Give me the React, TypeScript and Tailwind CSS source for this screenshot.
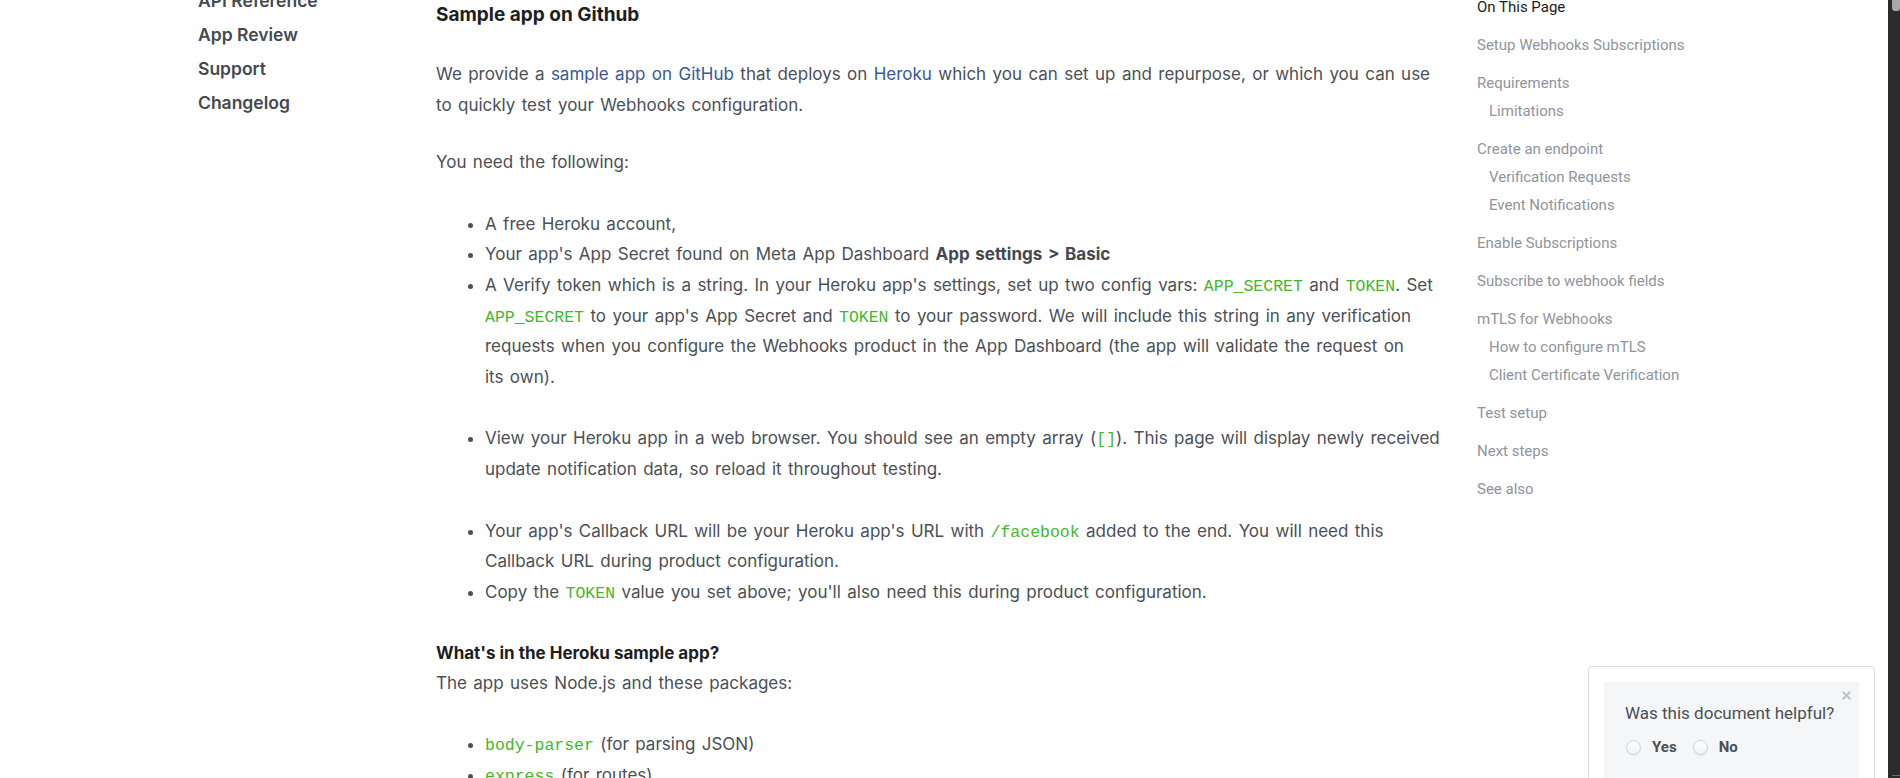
import React from 'react';
import { X } from 'lucide-react';

// ── data ───────────────────────────────────────────────────────────
const sideNav = ['API Reference', 'App Review', 'Support', 'Changelog'];

type TocGroup = { title: string; children?: string[] };

const toc: TocGroup[] = [
  { title: 'Setup Webhooks Subscriptions' },
  { title: 'Requirements', children: ['Limitations'] },
  { title: 'Create an endpoint', children: ['Verification Requests', 'Event Notifications'] },
  { title: 'Enable Subscriptions' },
  { title: 'Subscribe to webhook fields' },
  { title: 'mTLS for Webhooks', children: ['How to configure mTLS', 'Client Certificate Verification'] },
  { title: 'Test setup' },
  { title: 'Next steps' },
  { title: 'See also' },
];

function Code({ children }: { children: React.ReactNode }) {
  return (
    <code className="font-['Liberation_Mono',monospace] text-[16.5px] leading-none text-[#42b72a] [word-spacing:0]">
      {children}
    </code>
  );
}

function A({ children }: { children: React.ReactNode }) {
  return (
    <a href="#" className="text-[#385898]">
      {children}
    </a>
  );
}

// ── left nav ───────────────────────────────────────────────────────
function SideNav() {
  return (
    <nav className="w-[436px] shrink-0 pl-[198px] -mt-[16px]">
      {sideNav.map((label) => (
        <a
          key={label}
          href="#"
          className="block text-[17.5px] leading-[34px] font-semibold text-[#444950]"
        >
          {label}
        </a>
      ))}
    </nav>
  );
}

// ── article ────────────────────────────────────────────────────────
function Article() {
  return (
    <main className="w-[1004px] shrink-0 text-[17px] leading-[30.6px] text-[#4b4f56] [word-spacing:1.6px]">
      <h2 className="text-[19px] leading-[29px] font-bold text-[#1c1e21] [word-spacing:0]">
        Sample app on Github
      </h2>

      <p className="mt-[30px]">
        We provide a <A>sample app on GitHub</A> that deploys on <A>Heroku</A> which you can set up
        and repurpose, or which you can use to quickly test your Webhooks configuration.
      </p>

      <p className="mt-[27px]">You need the following:</p>

      <ul className="mt-[31px] list-disc pl-[49px]">
        <li>A free Heroku account,</li>
        <li>
          Your app's App Secret found on Meta App Dashboard{' '}
          <b className="font-bold text-[#444950]">App settings &gt; Basic</b>
        </li>
        <li className="mb-[31px]">
          A Verify token which is a string. In your Heroku app's settings, set up two config vars:{' '}
          <Code>APP_SECRET</Code> and <Code>TOKEN</Code>. Set <Code>APP_SECRET</Code> to your app's
          App Secret and <Code>TOKEN</Code> to your password. We will include this string in any
          verification requests when you configure the Webhooks product in the App Dashboard (the
          app will validate the request on
          <br />
          its own).
        </li>
        <li className="mb-[31px]">
          View your Heroku app in a web browser. You should see an empty array (<Code>[]</Code>).
          This page will display newly received update notification data, so reload it throughout
          testing.
        </li>
        <li>
          Your app's Callback URL will be your Heroku app's URL with <Code>/facebook</Code> added to
          the end. You will need this Callback URL during product configuration.
        </li>
        <li>
          Copy the <Code>TOKEN</Code> value you set above; you'll also need this during product
          configuration.
        </li>
      </ul>

      <h3 className="mt-[32px] text-[17px] leading-[29px] font-bold text-[#1c1e21] [word-spacing:0]">
        What's in the Heroku sample app?
      </h3>
      <p>The app uses Node.js and these packages:</p>

      <ul className="mt-[30px] list-disc pl-[49px]">
        <li>
          <Code>body-parser</Code> (for parsing JSON)
        </li>
        <li>
          <Code>express</Code> (for routes)
        </li>
      </ul>
    </main>
  );
}

// ── on this page ───────────────────────────────────────────────────
function Toc() {
  return (
    <aside className="ml-[37px] flex-1 font-['Roboto',sans-serif] text-[15px] leading-[28px]">
      <div className="-mt-[7px] text-[#1c1e21]">On This Page</div>
      {toc.map((g) => (
        <div key={g.title} className="mt-[10px]">
          <a href="#" className="block text-[#90949c]">
            {g.title}
          </a>
          {g.children?.map((c) => (
            <a key={c} href="#" className="block pl-[12px] text-[#90949c]">
              {c}
            </a>
          ))}
        </div>
      ))}
    </aside>
  );
}

// ── feedback widget ────────────────────────────────────────────────
function Radio({ label }: { label: string }) {
  return (
    <label className="flex items-center gap-[11px]">
      <span className="h-[15px] w-[15px] rounded-full border border-[#ccd0d5] bg-gradient-to-b from-white to-[#f1f2f4] shadow-[0_1px_1px_rgba(0,0,0,0.06)]" />
      <span className="text-[15px] font-bold text-[#4b4f56]">{label}</span>
    </label>
  );
}

function Feedback() {
  return (
    <div className="absolute right-[25px] top-[666px] w-[287px] rounded-[4px] border border-[#dadde1] bg-white p-[15px] pb-0">
      <div className="relative h-[120px] bg-[#f5f6f7] px-[21px] pt-[20px] font-['Roboto',sans-serif]">
        <button className="absolute right-[6px] top-[7px] text-[#bec3c9]">
          <X size={13} strokeWidth={3.5} />
        </button>
        <div className="text-[17px] leading-[22px] text-[#4b4f56]">Was this document helpful?</div>
        <div className="mt-[12px] flex items-center gap-[16px] pl-[1px]">
          <Radio label="Yes" />
          <Radio label="No" />
        </div>
      </div>
    </div>
  );
}

// ── scrollbar (browser chrome in the shot) ─────────────────────────
function Scrollbar() {
  return (
    <div className="relative w-[12px] shrink-0 bg-[#2b2b2b]">
      <div className="ml-[4px] h-[11px] w-[8px] rounded-b-[3px] bg-[#a8a8a8]" />
      <div className="absolute bottom-[2px] left-[4px] h-[1px] w-[8px] bg-[#6b6b6b]" />
    </div>
  );
}

export default function App() {
  return (
    <div className="relative flex h-[778px] w-[1900px] overflow-hidden bg-white font-['Inter',sans-serif]">
      <SideNav />
      <Article />
      <Toc />
      <Scrollbar />
      <Feedback />
    </div>
  );
}
